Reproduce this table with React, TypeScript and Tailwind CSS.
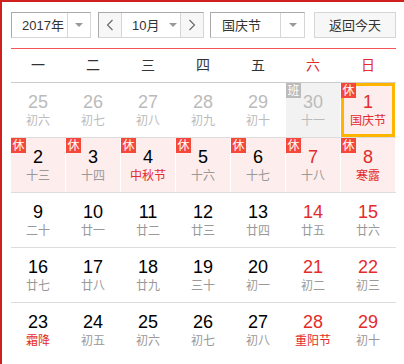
import React from "react";

type Cell = {
  n: string;
  l: string;
  numCls?: string; // number color class
  lunCls?: string; // lunar color class
  tag?: "休" | "班";
  bg?: string;
  today?: boolean;
};

const G = "text-[#bbb]";
const K = "text-black";
const R = "text-[#e42b2b]";
const L = "text-[#999]";

const rows: Cell[][] = [
  [
    { n: "25", l: "初六", numCls: G, lunCls: G },
    { n: "26", l: "初七", numCls: G, lunCls: G },
    { n: "27", l: "初八", numCls: G, lunCls: G },
    { n: "28", l: "初九", numCls: G, lunCls: G },
    { n: "29", l: "初十", numCls: G, lunCls: G },
    { n: "30", l: "十一", numCls: G, lunCls: G, tag: "班", bg: "bg-[#f2f2f2]" },
    { n: "1", l: "国庆节", numCls: R, lunCls: R, tag: "休", bg: "bg-[#fdeded]", today: true },
  ],
  [
    { n: "2", l: "十三", numCls: K, lunCls: L, tag: "休", bg: "bg-[#fdeded]" },
    { n: "3", l: "十四", numCls: K, lunCls: L, tag: "休", bg: "bg-[#fdeded]" },
    { n: "4", l: "中秋节", numCls: K, lunCls: R, tag: "休", bg: "bg-[#fdeded]" },
    { n: "5", l: "十六", numCls: K, lunCls: L, tag: "休", bg: "bg-[#fdeded]" },
    { n: "6", l: "十七", numCls: K, lunCls: L, tag: "休", bg: "bg-[#fdeded]" },
    { n: "7", l: "十八", numCls: R, lunCls: L, tag: "休", bg: "bg-[#fdeded]" },
    { n: "8", l: "寒露", numCls: R, lunCls: R, tag: "休", bg: "bg-[#fdeded]" },
  ],
  [
    { n: "9", l: "二十", numCls: K, lunCls: L },
    { n: "10", l: "廿一", numCls: K, lunCls: L },
    { n: "11", l: "廿二", numCls: K, lunCls: L },
    { n: "12", l: "廿三", numCls: K, lunCls: L },
    { n: "13", l: "廿四", numCls: K, lunCls: L },
    { n: "14", l: "廿五", numCls: R, lunCls: L },
    { n: "15", l: "廿六", numCls: R, lunCls: L },
  ],
  [
    { n: "16", l: "廿七", numCls: K, lunCls: L },
    { n: "17", l: "廿八", numCls: K, lunCls: L },
    { n: "18", l: "廿九", numCls: K, lunCls: L },
    { n: "19", l: "三十", numCls: K, lunCls: L },
    { n: "20", l: "初一", numCls: K, lunCls: L },
    { n: "21", l: "初二", numCls: R, lunCls: L },
    { n: "22", l: "初三", numCls: R, lunCls: L },
  ],
  [
    { n: "23", l: "霜降", numCls: K, lunCls: R },
    { n: "24", l: "初五", numCls: K, lunCls: L },
    { n: "25", l: "初六", numCls: K, lunCls: L },
    { n: "26", l: "初七", numCls: K, lunCls: L },
    { n: "27", l: "初八", numCls: K, lunCls: L },
    { n: "28", l: "重阳节", numCls: R, lunCls: R },
    { n: "29", l: "初十", numCls: R, lunCls: L },
  ],
];

const weekdays = ["一", "二", "三", "四", "五", "六", "日"];

function Caret() {
  return (
    <div className="w-0 h-0 border-l-[4px] border-r-[4px] border-t-[4px] border-l-transparent border-r-transparent border-t-[#999]" />
  );
}

function Chevron({ dir }: { dir: "l" | "r" }) {
  return (
    <svg width="8" height="12" viewBox="0 0 8 12">
      {dir === "l" ? (
        <polyline points="6.5,1 1.5,6 6.5,11" fill="none" stroke="#666" strokeWidth="1.1" />
      ) : (
        <polyline points="1.5,1 6.5,6 1.5,11" fill="none" stroke="#666" strokeWidth="1.1" />
      )}
    </svg>
  );
}

const boxBorder =
  "border border-t-[#a9a9a9] border-l-[#a9a9a9] border-r-[#d6d6d6] border-b-[#d6d6d6]";

export default function App() {
  return (
    <div className="w-[404px] h-[364px] overflow-hidden bg-white border-l-2 border-t-2 border-[#d0201e] pl-[9px] font-['Liberation_Sans','Noto_Sans_CJK_SC',sans-serif]">
      {/* controls */}
      <div className="flex pt-[10px] h-[46px] text-[13px] text-[#333]">
        <div className={`w-[80px] h-[26px] flex bg-white ${boxBorder}`}>
          <div className="w-[55px] flex items-center pl-[10px] leading-none">2017年</div>
          <div className="flex-1 border-l border-[#d6d6d6] flex items-center justify-center">
            <Caret />
          </div>
        </div>
        <div className={`ml-[7px] w-[106px] h-[26px] flex ${boxBorder}`}>
          <div className="w-[22px] bg-[#f7f7f7] flex items-center justify-center">
            <Chevron dir="l" />
          </div>
          <div className="w-[60px] border-l border-r border-[#d6d6d6] bg-white flex items-center">
            <span className="ml-[10px] leading-none">10月</span>
            <div className="ml-[10px]">
              <Caret />
            </div>
          </div>
          <div className="flex-1 bg-[#f7f7f7] flex items-center justify-center">
            <Chevron dir="r" />
          </div>
        </div>
        <div className={`ml-[6px] w-[95px] h-[26px] flex bg-white ${boxBorder}`}>
          <div className="w-[69px] flex items-center pl-[11px] leading-none">国庆节</div>
          <div className="flex-1 border-l border-[#d6d6d6] flex items-center justify-center">
            <Caret />
          </div>
        </div>
        <div className="ml-[9px] w-[82px] h-[26px] border border-[#d6d6d6] bg-[#f7f7f7] flex items-center justify-center leading-none">
          返回今天
        </div>
      </div>

      {/* red line */}
      <div className="w-[385px] h-px bg-[#f55454]" />

      {/* weekdays */}
      <div className="w-[385px] h-[34px] flex border-b border-[#cccccc]">
        {weekdays.map((w, i) => (
          <div
            key={w}
            className={`w-[55px] pr-px flex items-center justify-center text-[14px] ${
              i >= 5 ? "text-[#e42b2b]" : "text-[#333]"
            }`}
          >
            {w}
          </div>
        ))}
      </div>

      {/* days */}
      {rows.map((row, ri) => (
        <div
          key={ri}
          className={`w-[385px] flex ${ri < rows.length - 1 ? "h-[55px] border-b border-[#dddddd]" : "h-[54px]"}`}
        >
          {row.map((c, ci) => (
            <div key={ci} className="w-[55px] h-[54px] pr-px">
              <div className={`relative w-[54px] h-[54px] pt-[8px] flex flex-col items-center ${c.bg ?? ""}`}>
                {c.today && (
                  <div className="absolute inset-0 border-[3px] border-[#ffb400]" />
                )}
                {c.tag && (
                  <div
                    className={`absolute top-0 left-0 z-10 w-[15px] h-[15px] flex items-center justify-center text-[12px] leading-none text-white ${
                      c.tag === "休" ? "bg-[#f5483b]" : "bg-[#bbbbbb]"
                    }`}
                  >
                    {c.tag}
                  </div>
                )}
                <div className={`relative text-[18px] leading-[22px] ${c.numCls}`}>{c.n}</div>
                <div className={`relative text-[12px] leading-[16px] ${c.lunCls}`}>{c.l}</div>
              </div>
            </div>
          ))}
        </div>
      ))}
    </div>
  );
}
